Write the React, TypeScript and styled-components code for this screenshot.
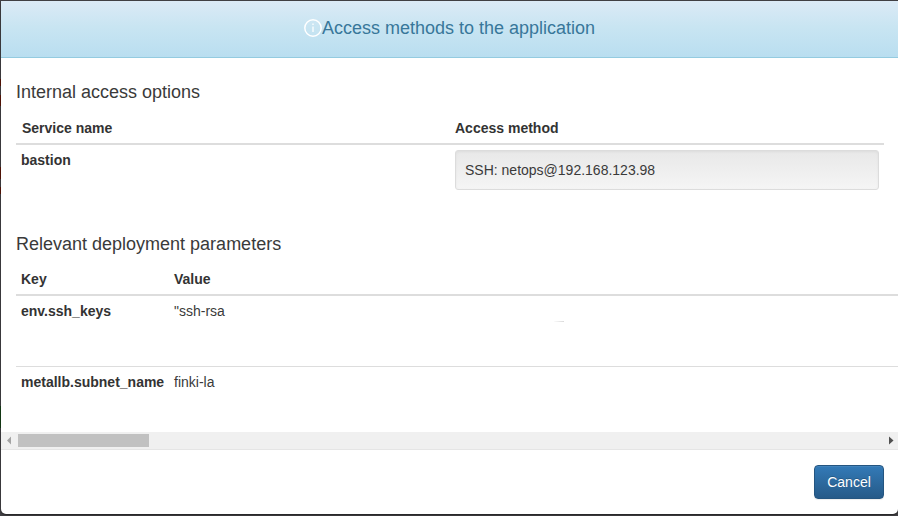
import React from "react";
import styled, { createGlobalStyle } from "styled-components";

const GlobalStyle = createGlobalStyle`
  * { box-sizing: border-box; }
  body {
    margin: 0;
    background: #424145;
    font: 14px/20px "Liberation Sans", Arial, sans-serif;
    color: #3a3a3a;
    overflow: hidden;
  }
`;

const Backdrop = styled.div`
  height: 516px;
  padding: 1px 0 2px 1px;
  background:
    linear-gradient(#5a1508, #5a1508) 0 79px / 1px 7px no-repeat,
    linear-gradient(#5a1508, #5a1508) 0 95px / 1px 11px no-repeat,
    linear-gradient(#5a1508, #5a1508) 0 167px / 1px 12px no-repeat,
    linear-gradient(#5a1508, #5a1508) 0 187px / 1px 7px no-repeat,
    linear-gradient(#153f17, #153f17) 0 406px / 1px 22px no-repeat,
    #424145;
`;

const Dialog = styled.section`
  height: 513px;
  display: flex;
  flex-direction: column;
  background: #fff;
  border-radius: 0 0 5px 5px;
  overflow: hidden;
  box-shadow: 0 1px 2px rgba(0, 0, 0, 0.5);
`;

const Header = styled.header`
  flex: none;
  height: 57px;
  padding-bottom: 2px;
  display: flex;
  align-items: center;
  justify-content: center;
  background: linear-gradient(#dbeaf6 0%, #c9e5f2 45%, #b9def0 100%);
  border-bottom: 1px solid #94cbe0;
  color: #38779a;
`;

const Title = styled.h4`
  margin: 0;
  font-size: 18px;
  line-height: 20px;
  font-weight: 400;
`;

const InfoIcon = styled.svg`
  width: 18px;
  height: 18px;
  flex: none;
`;

const Content = styled.main`
  flex: none;
  height: 374px;
  padding: 24px 0 0 15px;
  overflow: hidden;
`;

const SectionTitle = styled.h4<{ $gap: number }>`
  margin: 0 0 ${(p) => p.$gap}px;
  font-size: 18px;
  line-height: 20px;
  font-weight: 400;
`;

const Services = styled.div`
  width: 868px;
  height: 152px;
`;

const Parameters = styled.div`
  width: 1200px;
`;

const Row = styled.div<{ $columns: string; $height: number; $divided?: boolean }>`
  display: grid;
  grid-template-columns: ${(p) => p.$columns};
  height: ${(p) => p.$height}px;
  padding-top: 5px;
  border-top: ${(p) => (p.$divided ? "1px solid #ddd" : "0")};
`;

const HeadRow = styled(Row)`
  padding-top: 4px;
  border-bottom: 2px solid #ddd;
  color: #333;
  font-weight: 700;
`;

const Cell = styled.div<{ $bold?: boolean }>`
  padding: 0 5px;
  white-space: nowrap;
  ${(p) => p.$bold && "font-weight: 700; color: #333;"}
`;

const ServiceHeading = styled(Cell)`
  padding-left: 6px;
`;

const Well = styled.div`
  height: 40px;
  padding: 9px;
  border: 1px solid #dcdcdc;
  border-radius: 3px;
  background: linear-gradient(#e8e8e8, #f5f5f5);
  box-shadow: inset 0 1px 3px rgba(0, 0, 0, 0.05);
`;

const Smudge = styled.span`
  display: block;
  width: 10px;
  height: 1px;
  margin-left: 380px;
  background: linear-gradient(90deg, #fafafa, #dadada);
`;

const ScrollBar = styled.div`
  flex: none;
  display: flex;
  align-items: center;
  height: 17px;
  background: #f0f0f0;
`;

const ScrollThumb = styled.div`
  width: 131px;
  height: 13px;
  background: #c1c1c1;
`;

const Arrow = styled.svg<{ $end?: boolean }>`
  width: 17px;
  height: 17px;
  flex: none;
  margin-left: ${(p) => (p.$end ? "auto" : "0")};
  margin-right: ${(p) => (p.$end ? "-1px" : "0")};
  fill: ${(p) => (p.$end ? "#505050" : "#a3a3a3")};
`;

const Footer = styled.footer`
  flex: 1;
  padding: 15px 14px 0 0;
  display: flex;
  justify-content: flex-end;
  border-top: 1px solid #e5e5e5;
`;

const CancelButton = styled.button`
  width: 70px;
  height: 34px;
  padding: 0;
  border: 1px solid #245580;
  border-radius: 4px;
  background: linear-gradient(#337ab7, #265a88);
  box-shadow: inset 0 1px 0 rgba(255, 255, 255, 0.08), 0 1px 1px rgba(0, 0, 0, 0.075);
  color: #fff;
  font: 14px/20px "Liberation Sans", Arial, sans-serif;
  text-shadow: 0 -1px 0 rgba(0, 0, 0, 0.2);
`;

const serviceColumns = "434px 434px";
const parameterColumns = "153px 1fr";

export default function App() {
  return (
    <>
      <GlobalStyle />
      <Backdrop>
        <Dialog role="dialog" aria-label="Access methods">
          <Header>
            <InfoIcon viewBox="0 0 18 18" aria-hidden="true">
              <circle cx="9" cy="9" r="8.2" fill="none" stroke="#fff" strokeWidth="1.5" />
              <path d="M9 4.5v1.6M9 7.5v5.6" stroke="#fff" strokeOpacity="0.85" strokeWidth="1.5" />
            </InfoIcon>
            <Title>Access methods to the application</Title>
          </Header>
          <Content>
            <Services>
              <SectionTitle $gap={12}>Internal access options</SectionTitle>
              <HeadRow $columns={serviceColumns} $height={31}>
                <ServiceHeading>Service name</ServiceHeading>
                <Cell>Access method</Cell>
              </HeadRow>
              <Row $columns={serviceColumns} $height={50}>
                <Cell $bold>bastion</Cell>
                <Cell>
                  <Well>SSH: netops@192.168.123.98</Well>
                </Cell>
              </Row>
            </Services>
            <Parameters>
              <SectionTitle $gap={11}>Relevant deployment parameters</SectionTitle>
              <HeadRow $columns={parameterColumns} $height={31}>
                <Cell>Key</Cell>
                <Cell>Value</Cell>
              </HeadRow>
              <Row $columns={parameterColumns} $height={70}>
                <Cell $bold>env.ssh_keys</Cell>
                <Cell>
                  "ssh-rsa
                  <Smudge />
                </Cell>
              </Row>
              <Row $columns={parameterColumns} $height={66} $divided>
                <Cell $bold>metallb.subnet_name</Cell>
                <Cell>finki-la</Cell>
              </Row>
            </Parameters>
          </Content>
          <ScrollBar>
            <Arrow viewBox="0 0 17 17" aria-hidden="true">
              <path d="M10 4.5v8L6 8.5z" />
            </Arrow>
            <ScrollThumb />
            <Arrow $end viewBox="0 0 17 17" aria-hidden="true">
              <path d="M7 4.5v8l4.5-4z" />
            </Arrow>
          </ScrollBar>
          <Footer>
            <CancelButton type="button">Cancel</CancelButton>
          </Footer>
        </Dialog>
      </Backdrop>
    </>
  );
}
